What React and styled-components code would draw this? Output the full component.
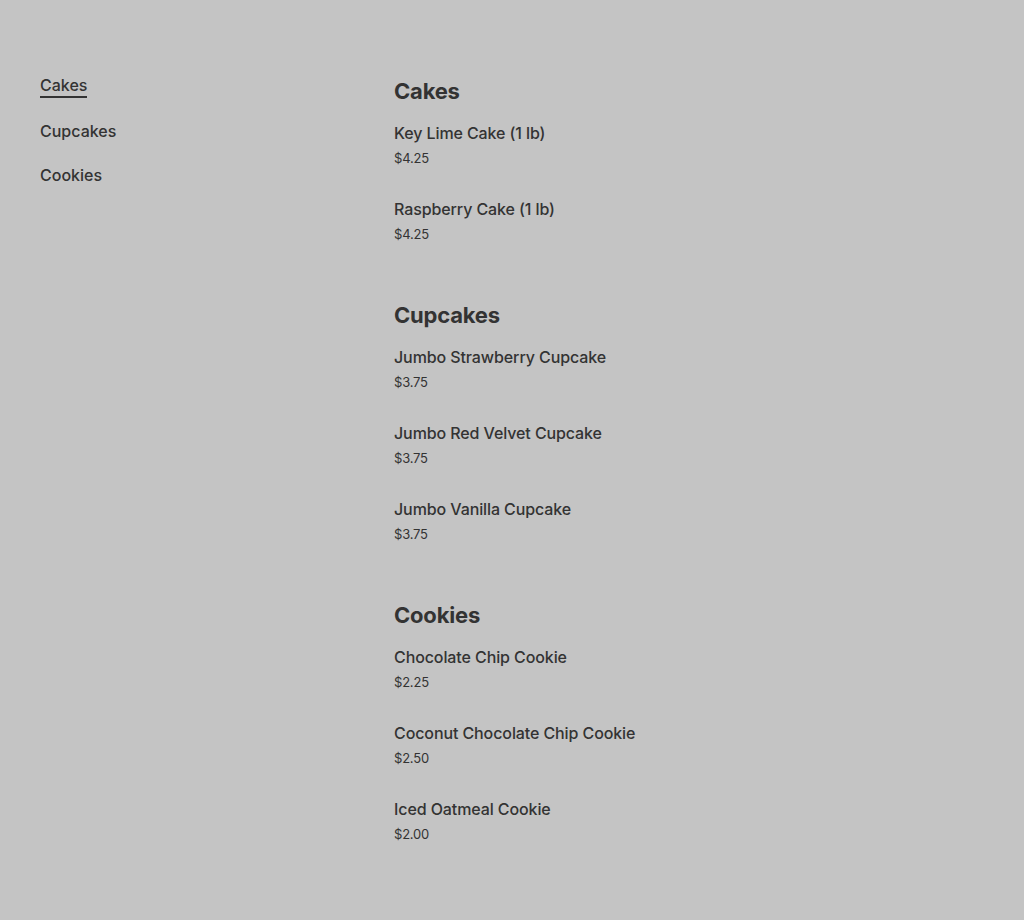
import React from "react";
import styled, { createGlobalStyle } from "styled-components";

const Global = createGlobalStyle`
  html, body { margin: 0; padding: 0; background: #c4c4c4; }
  body { font-family: Inter, "Noto Sans", sans-serif; color: #333333; -webkit-font-smoothing: antialiased; }
`;

const Page = styled.div`
  display: grid;
  grid-template-columns: 354px 1fr;
  padding: 74px 40px 60px;
  min-height: 920px;
  box-sizing: border-box;
`;

const Nav = styled.nav`
  display: flex;
  flex-direction: column;
  align-items: flex-start;
  gap: 22px;
`;

const NavLink = styled.a`
  font-size: 16px;
  line-height: 22px;
  font-weight: 500;
  color: #333333;
  text-decoration: none;
  border-bottom: ${(p) => (p.$active ? "2px solid #333333" : "none")};
  cursor: pointer;
`;

const Menu = styled.main`
  display: flex;
  flex-direction: column;
  gap: 55px;
  margin-top: 1px;
`;

const Section = styled.section`
  display: flex;
  flex-direction: column;
`;

const Heading = styled.h2`
  margin: 0 0 14px;
  font-size: 22px;
  line-height: 32px;
  font-weight: 700;
  letter-spacing: -0.2px;
`;

const Items = styled.div`
  display: flex;
  flex-direction: column;
  gap: 29px;
`;

const Item = styled.div`
  display: flex;
  flex-direction: column;
  gap: 3px;
`;

const Name = styled.div`
  font-size: 16px;
  line-height: 24px;
  font-weight: 500;
  letter-spacing: -0.1px;
`;

const Price = styled.div`
  font-size: 13px;
  line-height: 20px;
  font-weight: 400;
  letter-spacing: -0.2px;
`;

const data = [
  {
    title: "Cakes",
    items: [
      ["Key Lime Cake (1 lb)", "$4.25"],
      ["Raspberry Cake (1 lb)", "$4.25"],
    ],
  },
  {
    title: "Cupcakes",
    items: [
      ["Jumbo Strawberry Cupcake", "$3.75"],
      ["Jumbo Red Velvet Cupcake", "$3.75"],
      ["Jumbo Vanilla Cupcake", "$3.75"],
    ],
  },
  {
    title: "Cookies",
    items: [
      ["Chocolate Chip Cookie", "$2.25"],
      ["Coconut Chocolate Chip Cookie", "$2.50"],
      ["Iced Oatmeal Cookie", "$2.00"],
    ],
  },
];

export default function App() {
  return (
    <>
      <Global />
      <Page>
        <Nav>
          {data.map((s, i) => (
            <NavLink key={s.title} $active={i === 0}>
              {s.title}
            </NavLink>
          ))}
        </Nav>
        <Menu>
          {data.map((s) => (
            <Section key={s.title}>
              <Heading>{s.title}</Heading>
              <Items>
                {s.items.map(([n, p]) => (
                  <Item key={n}>
                    <Name>{n}</Name>
                    <Price>{p}</Price>
                  </Item>
                ))}
              </Items>
            </Section>
          ))}
        </Menu>
      </Page>
    </>
  );
}
